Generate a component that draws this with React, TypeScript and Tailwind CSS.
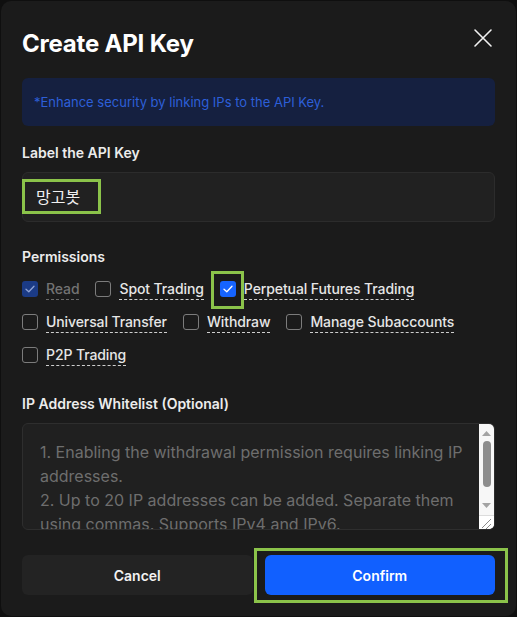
import React from "react";

const FONT = 'Inter, "Noto Sans CJK KR", "Noto Sans", sans-serif';

function Check({ color }: { color: string }) {
  return (
    <svg width="10" height="8" viewBox="0 0 10 8" fill="none">
      <path d="M1 4.2 L3.8 6.8 L9 1.2" stroke={color} strokeWidth="1.3" strokeLinecap="round" strokeLinejoin="round" />
    </svg>
  );
}

type Item = { label: string; state: "off" | "on" | "disabled"; highlight?: boolean };

function Perm({ label, state, highlight }: Item) {
  return (
    <div className="flex items-center gap-2 h-[22px]">
      <div className="relative w-4 h-4 shrink-0">
        {state === "off" && <div className="w-4 h-4 rounded-[3px] border border-[#7c7c7c]" />}
        {state === "on" && (
          <div className="w-4 h-4 rounded-[3px] bg-[#1664ff] flex items-center justify-center">
            <Check color="#ffffff" />
          </div>
        )}
        {state === "disabled" && (
          <div className="w-4 h-4 rounded-[3px] bg-[#1b3b86] flex items-center justify-center">
            <Check color="#8ea3d6" />
          </div>
        )}
        {highlight && (
          <div className="absolute left-[-9px] top-[-10px] w-[33px] h-[38px] border-[3px] border-[#8bc34a]" />
        )}
      </div>
      <span
        className={
          "text-[14px] font-medium leading-[20px] tracking-[-0.1px] border-b border-dashed " +
          (state === "disabled" ? "text-[#737373] border-[#6a6a6a]" : "text-[#e6e6e6] border-[#cfcfcf]")
        }
      >
        {label}
      </span>
    </div>
  );
}

export default function App() {
  const perms: Item[] = [
    { label: "Read", state: "disabled" },
    { label: "Spot Trading", state: "off" },
    { label: "Perpetual Futures Trading", state: "on", highlight: true },
    { label: "Universal Transfer", state: "off" },
    { label: "Withdraw", state: "off" },
    { label: "Manage Subaccounts", state: "off" },
    { label: "P2P Trading", state: "off" },
  ];
  return (
    <div className="w-[517px] h-[617px] bg-[#0f0f0f] p-px" style={{ fontFamily: FONT }}>
      <div className="w-full h-full rounded-[10px] bg-[#1b1b1b] px-[21px] pt-[28px]">
        {/* Header */}
        <div className="flex items-center justify-between h-[30px]">
          <h1 className="text-[24px] font-bold text-white leading-[30px] tracking-[-0.2px]">Create API Key</h1>
          <svg width="20" height="20" viewBox="0 0 20 20" className="mr-[2px] mt-[-12px]">
            <path d="M2 2 L18 18 M18 2 L2 18" stroke="#f2f2f2" strokeWidth="1.6" strokeLinecap="round" />
          </svg>
        </div>

        {/* Info box */}
        <div className="mt-[19px] h-[48px] rounded-[6px] bg-[#152040] flex items-center px-[12px]">
          <span className="text-[13px] text-[#2d5fd8] leading-none">*Enhance security by linking IPs to the API Key.</span>
        </div>

        {/* Label */}
        <div className="mt-[18px] text-[14px] font-semibold text-[#ececec] leading-[18px]">Label the API Key</div>
        <div className="relative mt-[10px] h-[50px] rounded-[6px] bg-[#212121] border border-[#2c2c2c] flex items-center px-[13px]">
          <span className="text-[16px] text-[#f0f0f0]">망고봇</span>
          <div className="absolute left-[-1px] top-[6px] w-[79px] h-[35px] border-[3px] border-[#8bc34a]" />
        </div>

        {/* Permissions */}
        <div className="mt-[26px] text-[14px] font-semibold text-[#ececec] leading-[18px]">Permissions</div>
        <div className="mt-[12px] flex flex-wrap gap-x-4 gap-y-[11px]">
          {perms.map((p) => (
            <Perm key={p.label} {...p} />
          ))}
        </div>

        {/* IP whitelist */}
        <div className="mt-[29px] text-[14px] font-semibold text-[#ececec] leading-[18px]">IP Address Whitelist (Optional)</div>
        <div className="relative mt-[10px] h-[107px] rounded-[6px] bg-[#202020] border border-[#2e2e2e] overflow-hidden">
          <div className="pl-[17px] pt-[16px] text-[16px] leading-[24px] text-[#6e6e6e] whitespace-nowrap">
            <div>1. Enabling the withdrawal permission requires linking IP</div>
            <div>addresses.</div>
            <div>2. Up to 20 IP addresses can be added. Separate them</div>
            <div>using commas. Supports IPv4 and IPv6.</div>
          </div>
          {/* native-looking scrollbar */}
          <div className="absolute right-0 top-0 bottom-0 w-[15px] bg-[#f7f7f7] flex flex-col">
            <div className="flex flex-col items-center flex-1">
              <svg width="9" height="5" viewBox="0 0 9 5" className="mt-[7px]">
                <path d="M0 5 L4.5 0 L9 5 Z" fill="#a3a3a3" />
              </svg>
              <div className="mt-[5px] w-[8px] h-[46px] rounded-full bg-[#8d8d8d]" />
              <div className="flex-1" />
              <svg width="9" height="5" viewBox="0 0 9 5" className="mb-[7px]">
                <path d="M0 0 L4.5 5 L9 0 Z" fill="#a3a3a3" />
              </svg>
            </div>
            <div className="h-[14px] border-t border-[#dcdcdc] bg-white relative">
              <svg width="14" height="13" viewBox="0 0 14 13" className="absolute left-0 top-0">
                <path d="M12 3 L3 12 M12 8 L7 13" stroke="#8a8a8a" strokeWidth="1" />
              </svg>
            </div>
          </div>
        </div>

        {/* Buttons */}
        <div className="mt-[25px] flex gap-3">
          <button className="flex-1 h-[40px] rounded-[6px] bg-[#232323] text-[14px] font-semibold text-[#f2f2f2]">Cancel</button>
          <div className="relative flex-1">
            <button className="w-full h-[40px] rounded-[6px] bg-[#1160ff] text-[14px] font-semibold text-white">Confirm</button>
            <div className="absolute left-[-11px] top-[-7px] w-[254px] h-[55px] border-[3px] border-[#8bc34a] pointer-events-none" />
          </div>
        </div>
      </div>
    </div>
  );
}
